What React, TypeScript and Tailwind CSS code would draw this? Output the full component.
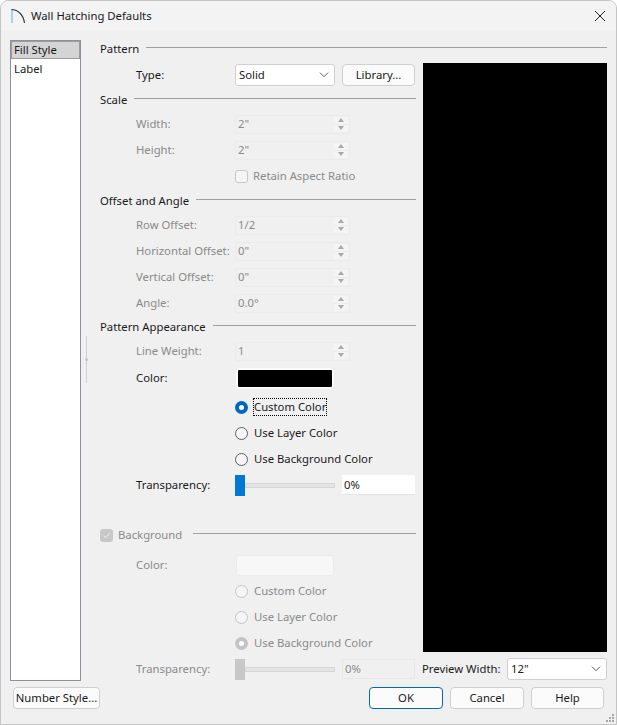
import React from "react";

const Heading = ({ text, className, lineClass = "" }: { text: string; className: string; lineClass?: string }) => (
  <div className={`flex items-center gap-[7px] text-[#1a1a1a] ${className}`}>
    <span>{text}</span>
    <div className={`flex-1 h-px bg-[#a0a0a0] -mt-[3px] ${lineClass}`} />
  </div>
);

const Spin = () => (
  <div className="flex flex-col w-[14px] h-[15px] bg-[#ebebeb] gap-px">
    <div className="flex-1 bg-[#f4f4f4] flex items-center justify-center">
      <div className="w-0 h-0 border-x-[3px] border-x-transparent border-b-[4px] border-b-[#a8a8a8]" />
    </div>
    <div className="flex-1 bg-[#f4f4f4] flex items-center justify-center">
      <div className="w-0 h-0 border-x-[3px] border-x-transparent border-t-[4px] border-t-[#a8a8a8]" />
    </div>
  </div>
);

const SpinRow = ({ label, value }: { label: string; value: string }) => (
  <div className="h-[26px] flex items-center pl-9">
    <span className="w-[99px] text-[#8a8a8a] whitespace-nowrap">{label}</span>
    <div className="w-[115px] h-[19px] border border-[#ebebeb] flex items-center justify-between pl-[2px] pr-px text-[#8a8a8a]">
      <span>{value}</span>
      <Spin />
    </div>
  </div>
);

const Radio = ({ label, checked, disabled, focus }: { label: string; checked?: boolean; disabled?: boolean; focus?: boolean }) => (
  <div className="h-[26px] flex items-center pl-[135px] gap-[6px]">
    {checked ? (
      <div className={`w-[13px] h-[13px] rounded-full flex items-center justify-center ${disabled ? "bg-[#c4c4c4]" : "bg-[#0067c0]"}`}>
        <div className="w-[5px] h-[5px] rounded-full bg-white" />
      </div>
    ) : (
      <div className={`w-[13px] h-[13px] rounded-full border ${disabled ? "border-[#c4c4c4] bg-[#f5f5f5]" : "border-[#5f5f5f] bg-[#f5f5f5]"}`} />
    )}
    <span className={`${disabled ? "text-[#8a8a8a]" : "text-[#1a1a1a]"} ${focus ? "outline-1 outline-dotted outline-black" : ""}`}>{label}</span>
  </div>
);

const Slider = ({ disabled }: { disabled?: boolean }) => (
  <div className="h-[26px] flex items-center pl-9">
    <span className={`w-[99px] ${disabled ? "text-[#8a8a8a]" : "text-[#1a1a1a]"}`}>Transparency:</span>
    <div className={`w-[10px] h-[21px] ${disabled ? "bg-[#c8c8c8]" : "bg-[#0078d4]"}`} />
    <div className="w-[90px] h-[5px] bg-[#e3e5e3] border border-[#d6d8d6] mr-[7px]" />
    {disabled ? (
      <div className="w-[73px] h-[20px] border border-[#e8e8e8] pl-[2px] flex items-center text-[#8a8a8a]">0%</div>
    ) : (
      <div className="w-[73px] h-[20px] bg-white pl-[2px] flex items-center text-[#1a1a1a] border-b border-[#e4e4e4]">0%</div>
    )}
  </div>
);

const Btn = ({ children, className = "" }: { children: React.ReactNode; className?: string }) => (
  <button className={`h-[22px] rounded-[4px] border border-[#d0d0d0] bg-[#fbfbfb] text-[#1a1a1a] flex items-center justify-center whitespace-nowrap ${className}`}>
    {children}
  </button>
);

const Chevron = () => (
  <svg width="10" height="6" viewBox="0 0 10 6" fill="none" stroke="#5a5a5a" strokeWidth="1">
    <path d="M1 .7 5 4.7 9 .7" />
  </svg>
);

const Select = ({ value, className }: { value: string; className: string }) => (
  <div className={`h-[22px] rounded-[3px] border border-[#d0d0d0] bg-white flex items-center justify-between pl-[3px] pr-[5px] text-[#1a1a1a] ${className}`}>
    <span>{value}</span>
    <Chevron />
  </div>
);

export default function App() {
  return (
    <div className="relative w-[617px] h-[725px] overflow-hidden bg-[#f0f0f0] border border-[#c4c4c4] rounded-t-[8px] flex flex-col text-[11.3px] leading-[16px] font-['Noto_Sans','Open_Sans',sans-serif]">
      <div className="h-[30px] shrink-0 bg-[#f3f3f3] flex items-center pl-[9px] pr-[9px]">
        <svg width="16" height="16" viewBox="0 0 16 16" fill="none" className="mr-[5px]">
          <rect x="1" y="1" width="2" height="14" fill="#9fd5f3" />
          <path d="M1.5 1.5C8 1.5 13.5 7 14.5 15" stroke="#333" strokeWidth="1.1" />
        </svg>
        <span className="text-[#1a1a1a]">Wall Hatching Defaults</span>
        <svg width="12" height="12" viewBox="0 0 12 12" className="ml-auto mr-px" stroke="#222" strokeWidth="1">
          <path d="M1 1 11 11M11 1 1 11" />
        </svg>
      </div>

      <div className="flex-1 flex pl-[9px] pr-[9px] min-h-0">
        <div className="w-[71px] mt-[9px] mb-[3px] h-[641px] bg-white border border-[#8f8f9d] text-[#1a1a1a] shrink-0">
          <div className="h-[18px] bg-[#d4d4d4] border border-[#9c9c9c] pl-[2px] flex items-center">Fill Style</div>
          <div className="h-[19px] pl-[3px] flex items-center">Label</div>
        </div>

        <div className="ml-[19px] w-[507px] pt-[5px]">
          <Heading text="Pattern" className="h-[26px]" />
          <div className="flex">
            <div className="w-[316px] shrink-0">
              <div className="h-[26px] flex items-center pl-9">
                <span className="w-[99px] text-[#1a1a1a]">Type:</span>
                <Select value="Solid" className="w-[100px] mr-[7px]" />
                <Btn className="w-[73px]">Library...</Btn>
              </div>
              <Heading text="Scale" className="h-[23px]" />
              <SpinRow label="Width:" value={'2"'} />
              <SpinRow label="Height:" value={'2"'} />
              <div className="h-[26px] flex items-center pl-[135px] gap-[5px]">
                <div className="w-[13px] h-[13px] rounded-[3px] border border-[#c8c8c8] bg-[#f5f5f5]" />
                <span className="text-[#8a8a8a]">Retain Aspect Ratio</span>
              </div>
              <Heading text="Offset and Angle" className="h-[23px]" />
              <SpinRow label="Row Offset:" value="1/2" />
              <SpinRow label="Horizontal Offset:" value={'0"'} />
              <SpinRow label="Vertical Offset:" value={'0"'} />
              <SpinRow label="Angle:" value="0.0°" />
              <Heading text="Pattern Appearance" className="h-[22px]" />
              <SpinRow label="Line Weight:" value="1" />
              <div className="h-[28px] flex items-center pl-9">
                <span className="w-[100px] text-[#1a1a1a]">Color:</span>
                <div className="w-[98px] h-[21px] rounded-[3px] border border-[#d0d0d0] border-b-2 bg-black outline-2 -outline-offset-2 outline-[#fbfbfb]" />
              </div>
              <div className="h-[2px]" />
              <Radio label="Custom Color" checked focus />
              <Radio label="Use Layer Color" />
              <Radio label="Use Background Color" />
              <Slider />
              <div className="h-[26px]" />
              <div className="h-[22px] flex items-center gap-[5px] text-[#8a8a8a]">
                <div className="w-[13px] h-[13px] rounded-[3px] bg-[#c8c8c8] flex items-center justify-center">
                  <svg width="9" height="9" viewBox="0 0 9 9" fill="none" stroke="#f0f0f0" strokeWidth="1">
                    <path d="M1.5 4.7 3.6 6.8 7.6 2.2" />
                  </svg>
                </div>
                <span>Background</span>
                <div className="flex-1 h-px bg-[#a0a0a0] ml-[6px] -mt-[3px]" />
              </div>
              <div className="h-[6px]" />
              <div className="h-[26px] flex items-center pl-9">
                <span className="w-[100px] text-[#8a8a8a]">Color:</span>
                <div className="w-[98px] h-[21px] rounded-[3px] border border-[#ebebeb] bg-[#f7f7f7]" />
              </div>
              <Radio label="Custom Color" disabled />
              <Radio label="Use Layer Color" disabled />
              <Radio label="Use Background Color" checked disabled />
              <Slider disabled />
            </div>

            <div className="ml-[7px] flex-1 flex flex-col">
              <div className="h-[589px] mt-[1px] bg-black" />
              <div className="h-[34px] -ml-px flex items-center">
                <span className="w-[85px] shrink-0 text-[#1a1a1a] whitespace-nowrap">Preview Width:</span>
                <Select value={'12"'} className="flex-1" />
              </div>
            </div>
          </div>
        </div>
      </div>

      <div className="absolute left-[85px] top-[335px] h-[47px] w-px bg-[#d2d2d2]" />
      <div className="absolute left-[84px] top-[357px] w-[3px] h-[3px] rounded-full bg-[#c4c4c4]" />

      <div className="h-[37px] shrink-0 flex items-start pl-[12px] pr-[12px]">
        <Btn className="w-[87px]">Number Style...</Btn>
        <div className="ml-auto flex gap-[7px]">
          <Btn className="w-[74px] !border-[#0067c0]">OK</Btn>
          <Btn className="w-[74px]">Cancel</Btn>
          <Btn className="w-[73px]">Help</Btn>
        </div>
      </div>

      <svg width="9" height="9" viewBox="0 0 9 9" className="absolute right-[1px] bottom-[1px]" fill="#a8a8a8">
        <rect x="6" y="0" width="2" height="2" />
        <rect x="3" y="3" width="2" height="2" />
        <rect x="6" y="3" width="2" height="2" />
        <rect x="0" y="6" width="2" height="2" />
        <rect x="3" y="6" width="2" height="2" />
        <rect x="6" y="6" width="2" height="2" />
      </svg>
    </div>
  );
}
